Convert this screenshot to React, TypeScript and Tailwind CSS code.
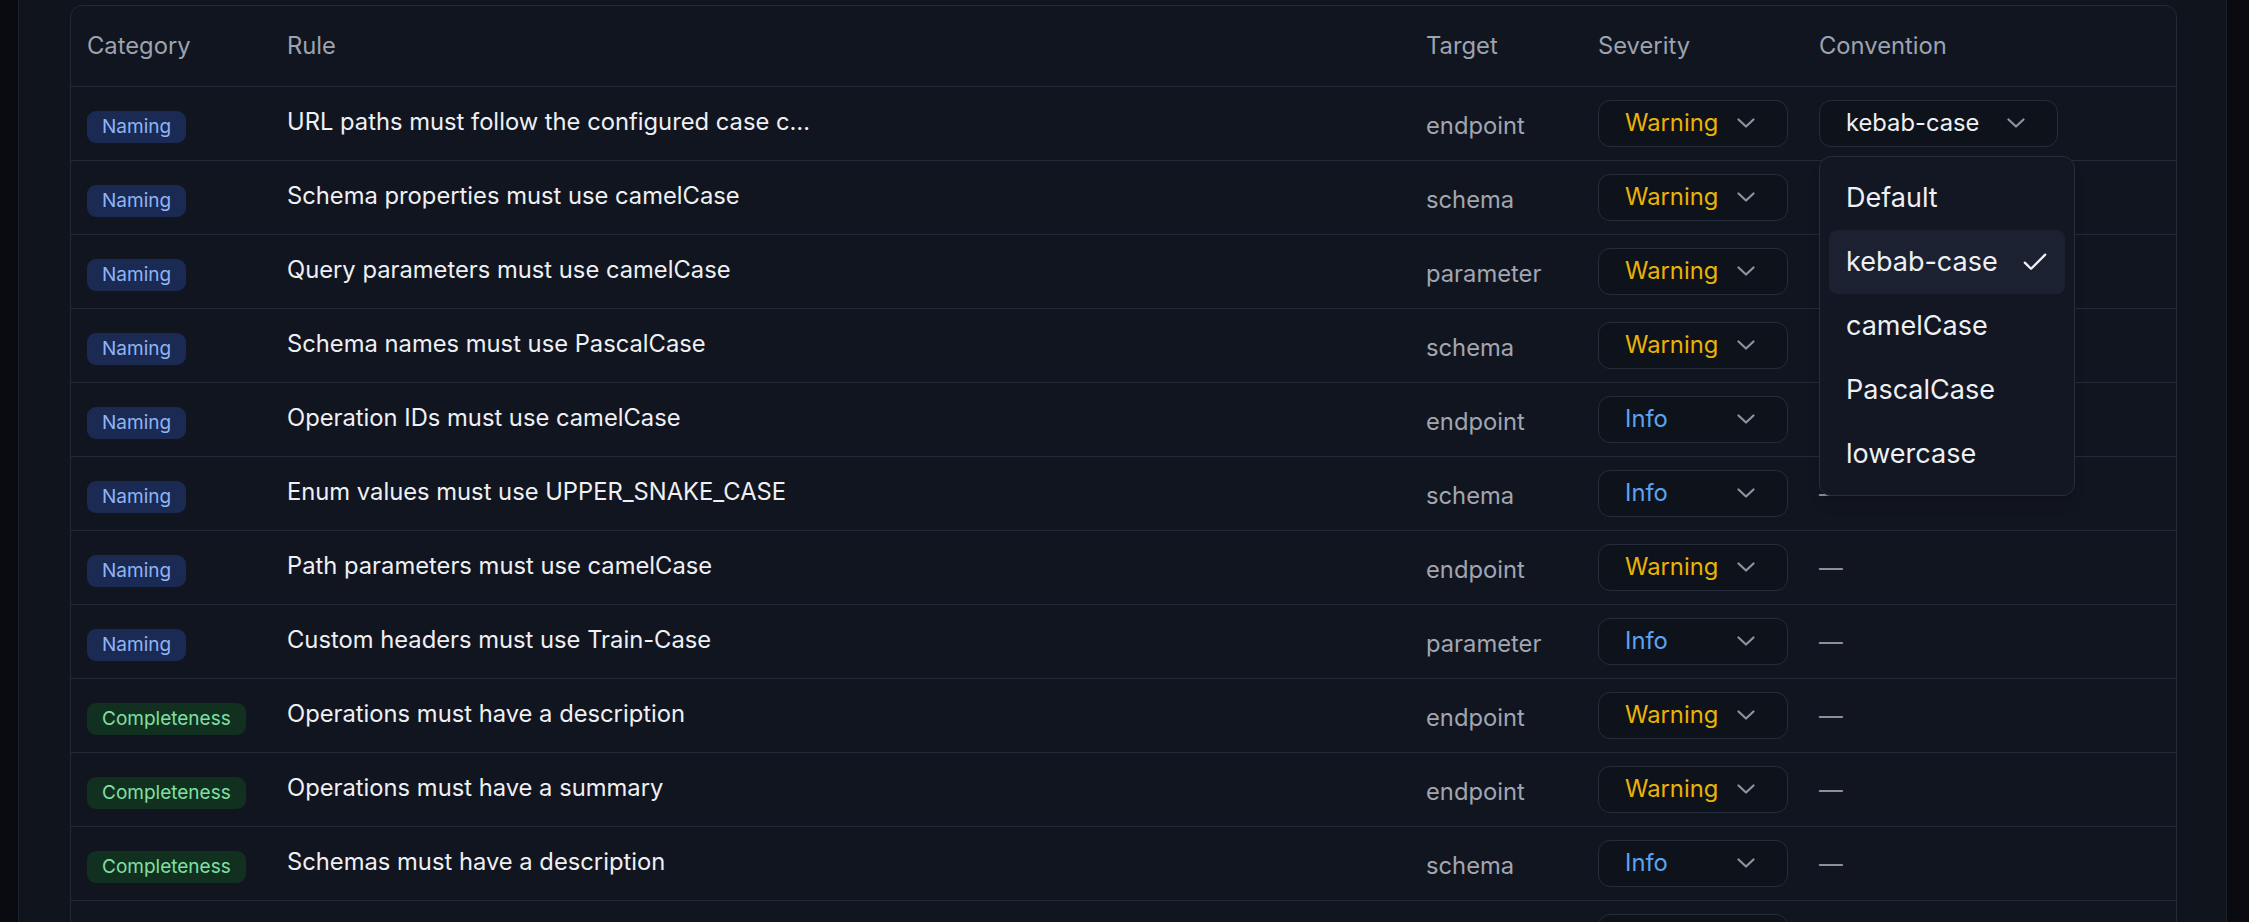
import { useState } from "react";

type Rule = {
  category: "Naming" | "Completeness";
  rule: string;
  target: string;
  severity: "Warning" | "Info";
  convention?: string;
};

const rules: Rule[] = [
  { category: "Naming", rule: "URL paths must follow the configured case convention", target: "endpoint", severity: "Warning", convention: "kebab-case" },
  { category: "Naming", rule: "Schema properties must use camelCase", target: "schema", severity: "Warning", convention: "camelCase" },
  { category: "Naming", rule: "Query parameters must use camelCase", target: "parameter", severity: "Warning", convention: "camelCase" },
  { category: "Naming", rule: "Schema names must use PascalCase", target: "schema", severity: "Warning", convention: "PascalCase" },
  { category: "Naming", rule: "Operation IDs must use camelCase", target: "endpoint", severity: "Info", convention: "camelCase" },
  { category: "Naming", rule: "Enum values must use UPPER_SNAKE_CASE", target: "schema", severity: "Info" },
  { category: "Naming", rule: "Path parameters must use camelCase", target: "endpoint", severity: "Warning" },
  { category: "Naming", rule: "Custom headers must use Train-Case", target: "parameter", severity: "Info" },
  { category: "Completeness", rule: "Operations must have a description", target: "endpoint", severity: "Warning" },
  { category: "Completeness", rule: "Operations must have a summary", target: "endpoint", severity: "Warning" },
  { category: "Completeness", rule: "Schemas must have a description", target: "schema", severity: "Info" },
  { category: "Completeness", rule: "Parameters must have a description", target: "parameter", severity: "Info" },
];

const conventions = ["Default", "kebab-case", "camelCase", "PascalCase", "lowercase"];

const Chevron = () => (
  <svg width="18" height="10" viewBox="0 0 18 10" fill="none" className="shrink-0">
    <path d="M1.5 1.5 9 8.5l7.5-7" stroke="#8e939d" strokeWidth="2.2" strokeLinecap="round" strokeLinejoin="round" />
  </svg>
);

const Check = () => (
  <svg width="24" height="18" viewBox="0 0 24 18" fill="none" className="shrink-0">
    <path d="M1.8 9.6 8 15.8 22.2 1.6" stroke="#eef0f3" strokeWidth="2.3" strokeLinecap="round" strokeLinejoin="round" />
  </svg>
);

const Badge = ({ category }: { category: Rule["category"] }) =>
  category === "Naming" ? (
    <span className="mt-[7px] inline-flex h-[32px] items-center rounded-[9px] bg-[#1a2a52] px-[15px] text-[19px] text-[#8fb4f6]">
      Naming
    </span>
  ) : (
    <span className="mt-[7px] inline-flex h-[32px] items-center rounded-[9px] bg-[#123020] px-[15px] text-[19px] text-[#7fe0a2]">
      Completeness
    </span>
  );

const SeveritySelect = ({ value }: { value: Rule["severity"] }) => (
  <button className="flex h-[47px] w-[190px] items-center justify-between rounded-[12px] border border-[#262c3a] bg-[#0e121a] pb-[2px] pl-[26px] pr-[32px]">
    <span className={value === "Warning" ? "text-[#eab308]" : "text-[#5ea3f0]"}>{value}</span>
    <Chevron />
  </button>
);

const ConventionSelect = ({ value, open }: { value: string; open: boolean }) => (
  <div className="relative">
    <button className="flex h-[47px] w-[239px] items-center justify-between rounded-[12px] border border-[#262c3a] bg-[#0e121a] pb-[2px] pl-[26px] pr-[32px] text-[#eef0f3]">
      <span>{value}</span>
      <Chevron />
    </button>
    {open && (
      <div className="absolute left-0 top-[56px] z-10 w-[256px] rounded-[12px] border border-[#272d3b] bg-[#121723] p-[9px] shadow-lg">
        {conventions.map((c) => (
          <div
            key={c}
            className={`flex h-[64px] items-center justify-between rounded-[8px] pl-[17px] pr-[18px] text-[27px] text-[#eef0f3] ${
              c === value ? "bg-[#1b2130]" : ""
            }`}
          >
            <span>{c}</span>
            {c === value && <Check />}
          </div>
        ))}
      </div>
    )}
  </div>
);

const App = () => {
  const [openRow] = useState(0);

  return (
    <div
      className="flex h-[922px] w-full overflow-hidden bg-[#090b11]"
      style={{ fontFamily: "Inter, 'Noto Sans', sans-serif" }}
    >
      <div className="w-[18px] shrink-0" />
      <div className="flex-1 border-x border-[#1b202b] bg-[#10141d] pl-[51px] pr-[49px] pt-[5px]">
        <div className="rounded-[12px] border border-[#232937] bg-[#111520] text-[23.75px]">
          <div className="grid h-[81px] grid-cols-[200px_1139px_172px_221px_1fr] items-center border-b border-[#232937] text-[#9ca3af]">
            <div className="pl-[16px]">Category</div>
            <div className="pl-[16px]">Rule</div>
            <div className="pl-[16px]">Target</div>
            <div className="pl-[16px]">Severity</div>
            <div className="pl-[16px]">Convention</div>
          </div>
          {rules.map((r, i) => (
            <div
              key={r.rule}
              className="grid h-[74px] grid-cols-[200px_1139px_172px_221px_1fr] items-center border-b border-[#232937]"
            >
              <div className="flex pl-[16px]">
                <Badge category={r.category} />
              </div>
              <div className="-mt-[3px] min-w-0 pl-[16px]">
                <div className="max-w-[532px] truncate text-[#eef0f3]">{r.rule}</div>
              </div>
              <div className="mt-[5px] pl-[16px] text-[#a1a6b0]">{r.target}</div>
              <div className="pl-[16px]">
                <SeveritySelect value={r.severity} />
              </div>
              <div className="pl-[16px]">
                {r.convention ? (
                  <ConventionSelect value={r.convention} open={i === openRow} />
                ) : (
                  <span className="text-[#8b919c]">—</span>
                )}
              </div>
            </div>
          ))}
        </div>
      </div>
      <div className="w-[22px] shrink-0" />
    </div>
  );
};

export default App;
